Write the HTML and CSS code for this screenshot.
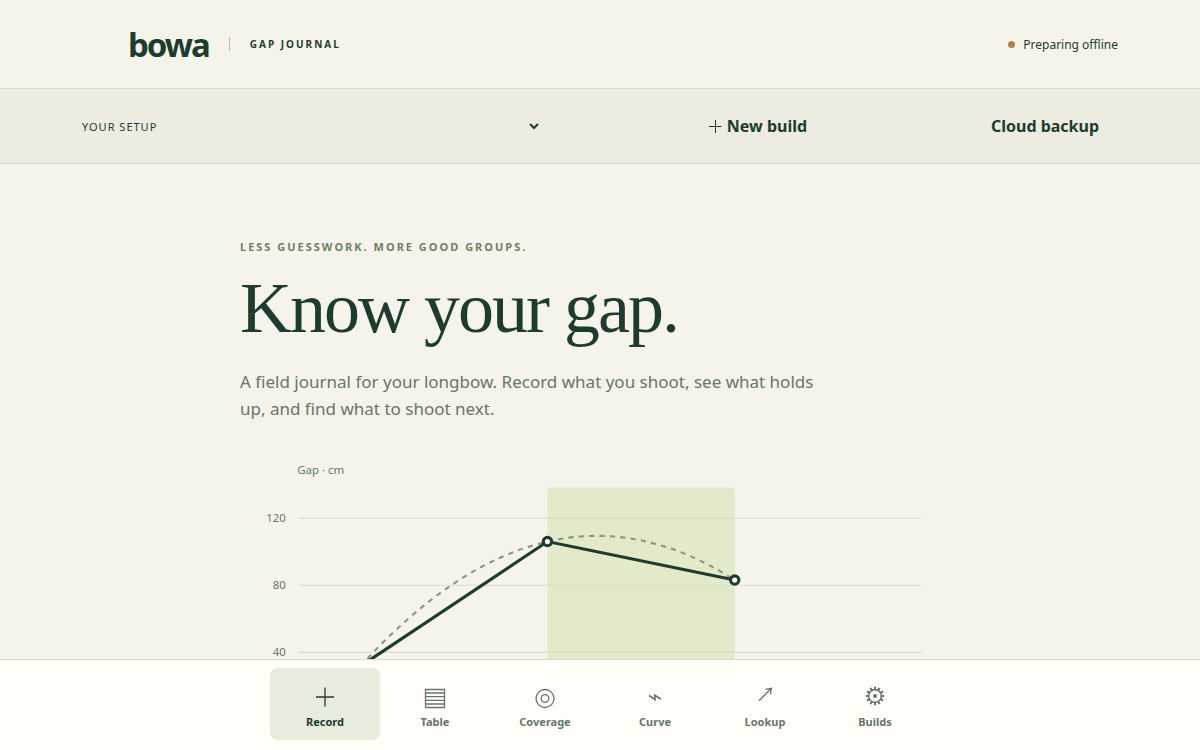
FILE: index.html
```html
<!DOCTYPE html>
<html lang="en">
<head>
    <meta charset="UTF-8">
    <meta name="viewport" content="width=device-width, initial-scale=1.0">
    <title>bowa - Gap Journal</title>
    <link rel="stylesheet" href="styles.css">
</head>
<body>
    <header class="topbar">
        <div class="brand">
            <a class="logo" href="#">bowa</a>
            <span class="brand-sub">GAP JOURNAL</span>
        </div>
        <div class="status"><span class="status-dot"></span>Preparing offline</div>
    </header>

    <section class="setup">
        <div class="setup-pick">
            <label for="build">YOUR SETUP</label>
            <select id="build"></select>
        </div>
        <button class="setup-btn" type="button">
            <svg class="plus" viewBox="0 0 16 16" aria-hidden="true"><path d="M2 8.5H14.5M8.5 2V15"/></svg>
            New build
        </button>
        <button class="setup-btn" type="button">Cloud backup</button>
    </section>

    <main class="content">
        <p class="eyebrow">LESS GUESSWORK. MORE GOOD GROUPS.</p>
        <h1>Know your gap.</h1>
        <p class="lead">A field journal for your longbow. Record what you shoot, see what holds up, and find what to shoot next.</p>

        <svg class="chart" viewBox="0 0 692 300" role="img" aria-label="Gap in centimetres by distance">
            <path class="grid" d="M56 65.5H655M56 130H655M56 194.5H655M56 259H655"/>
            <rect class="band" x="295.5" y="36" width="180" height="223" rx="3"/>
            <g class="axis">
                <text x="55" y="23">Gap · cm</text>
                <text x="44" y="69" text-anchor="end">120</text>
                <text x="44" y="134" text-anchor="end">80</text>
                <text x="44" y="198" text-anchor="end">40</text>
                <text x="44" y="263" text-anchor="end">0</text>
            </g>
            <path class="fit" d="M115.5 208Q295.5 9.5 475.5 125"/>
            <path class="line" d="M115.5 208L295.5 88L475.5 125"/>
            <g class="points">
                <circle cx="115.5" cy="208" r="4"/>
                <circle cx="295.5" cy="88" r="4"/>
                <circle cx="475.5" cy="125" r="4"/>
            </g>
        </svg>
    </main>

    <nav class="tabs">
        <button class="tab active" type="button">
            <svg class="tab-icon" viewBox="0 0 36 36" aria-hidden="true"><path d="M9 19H27M18 9.5V28.5"/></svg>
            Record
        </button>
        <button class="tab" type="button">
            <svg class="tab-icon" viewBox="0 0 36 36" aria-hidden="true"><path d="M8.5 11.5H27.5V29.5H8.5ZM8.5 15H27.5M8.5 18.7H27.5M8.5 22.3H27.5M8.5 26H27.5"/></svg>
            Table
        </button>
        <button class="tab" type="button">
            <svg class="tab-icon" viewBox="0 0 36 36" aria-hidden="true"><circle cx="18" cy="20.5" r="9"/><circle cx="18" cy="20.5" r="3.8"/></svg>
            Coverage
        </button>
        <button class="tab" type="button">
            <svg class="tab-icon" viewBox="0 0 36 36" aria-hidden="true"><path stroke-width="1.7" d="M12 17.5L18 21.5L17.7 17.2L24 21"/></svg>
            Curve
        </button>
        <button class="tab" type="button">
            <svg class="tab-icon" viewBox="0 0 36 36" aria-hidden="true"><path d="M12 22.7L24 10.7M18.5 11.3L24.4 10.4L23.5 16.3"/></svg>
            Lookup
        </button>
        <button class="tab" type="button">
            <svg class="tab-icon" viewBox="0 0 36 36" aria-hidden="true"><circle cx="18" cy="18" r="6.4" stroke-width="1.6"/><circle cx="18" cy="18" r="8" stroke-width="2.4" pathLength="24" stroke-dasharray="1 1" stroke-dashoffset="0.5"/><circle cx="18" cy="18" r="1" stroke-width="2"/></svg>
            Builds
        </button>
    </nav>
</body>
</html>
```
FILE: styles.css
```css
* {
    box-sizing: border-box;
}

body {
    font-family: "Noto Sans", sans-serif;
    margin: 0;
    padding-bottom: 92px;
    background-color: #f5f4eb;
    color: #1f3b2f;
}

button,
select {
    font-family: inherit;
    color: inherit;
    border: none;
    background: transparent;
}

button {
    cursor: pointer;
}

/* Header */
.topbar {
    display: flex;
    align-items: center;
    justify-content: space-between;
    height: 89px;
    padding: 0 82px;
    border-bottom: 1px solid #d9dacd;
}

.brand {
    display: flex;
    align-items: center;
    padding-left: 46px;
}

.logo {
    font-size: 33px;
    font-weight: bold;
    letter-spacing: -2px;
    color: inherit;
    text-decoration: none;
}

.brand-sub {
    margin-left: 20px;
    padding-left: 20px;
    border-left: 1px solid #b5bbae;
    font-size: 10px;
    line-height: 14px;
    font-weight: bold;
    letter-spacing: 2px;
}

.status {
    display: flex;
    align-items: center;
    gap: 8px;
    font-size: 12px;
}

.status-dot {
    width: 7px;
    height: 7px;
    border-radius: 50%;
    background-color: #ad8544;
}

/* Setup bar */
.setup {
    display: grid;
    grid-template-columns: 460px 1fr 146px;
    align-items: center;
    gap: 8px;
    height: 75px;
    padding: 0 82px;
    background-color: #ecede0;
    border-bottom: 1px solid #d9dacd;
}

.setup-pick {
    display: flex;
    align-items: center;
    gap: 8px;
}

.setup-pick label {
    font-size: 11px;
    letter-spacing: 1px;
}

.setup-pick select {
    flex: 1;
    height: 44px;
    font-size: 16px;
}

.setup-btn {
    display: flex;
    align-items: center;
    justify-content: center;
    gap: 4px;
    height: 44px;
    font-size: 16px;
    font-weight: bold;
}

.plus {
    width: 16px;
    height: 16px;
    stroke: currentColor;
}

/* Intro */
.content {
    max-width: 720px;
    margin: 0 auto;
    padding-top: 75px;
}

.eyebrow {
    margin: 0 0 17px;
    font-size: 11px;
    line-height: 16px;
    font-weight: bold;
    letter-spacing: 2px;
    color: #6f8063;
}

h1 {
    margin: 0 0 24px;
    font-family: "Liberation Serif", serif;
    font-size: 72px;
    line-height: 72px;
    font-weight: normal;
    letter-spacing: -2px;
}

.lead {
    max-width: 600px;
    margin: 0 0 28px;
    font-size: 17px;
    line-height: 27px;
    color: #68756b;
}

/* Chart */
.chart {
    display: block;
    width: 100%;
}

.grid {
    stroke: #1f3b2f;
    stroke-opacity: 0.11;
}

.band {
    fill: #d1e0a9;
    fill-opacity: 0.5;
}

.axis text {
    font-size: 11px;
    fill: #68756b;
}

.line {
    fill: none;
    stroke: #1f3b2f;
    stroke-width: 3;
}

.fit {
    fill: none;
    stroke: #8f9482;
    stroke-width: 2;
    stroke-dasharray: 5 5;
}

.points circle {
    fill: #fffef9;
    stroke: #1f3b2f;
    stroke-width: 3;
}

/* Bottom tabs */
.tabs {
    position: fixed;
    left: 0;
    right: 0;
    bottom: 0;
    display: flex;
    justify-content: center;
    padding: 8px 0 10px;
    background-color: #fffef9;
    border-top: 1px solid #d9dacd;
}

.tab {
    display: flex;
    flex-direction: column;
    align-items: center;
    justify-content: center;
    width: 110px;
    height: 72px;
    padding: 0;
    border-radius: 8px;
    font-size: 11px;
    line-height: 16px;
    font-weight: bold;
    color: #68756b;
}

.tab-icon {
    width: 36px;
    height: 36px;
    fill: none;
    stroke: currentColor;
    stroke-width: 1.3;
}

.tab.active {
    background-color: #e8ecdd;
    color: #1f3b2f;
}
```
